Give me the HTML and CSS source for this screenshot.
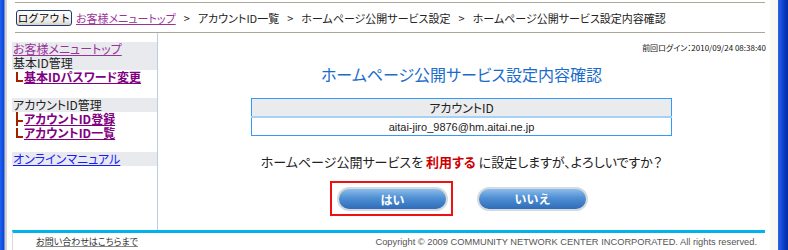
FILE: index.html
```html
<!DOCTYPE html>
<html lang="ja">
<head>
  <meta charset="UTF-8">
  <link rel="stylesheet" href="styles.css">
</head>
<body>
  <div class="window">
    <div class="edge-left"></div>

    <div class="page">
      <div class="topbar">
        <button class="logout">ログアウト</button>
        <a class="crumb-link" href="#">お客様メニュートップ</a>
        <span class="sep">&gt;</span>
        <span>アカウントID一覧</span>
        <span class="sep">&gt;</span>
        <span>ホームページ公開サービス設定</span>
        <span class="sep">&gt;</span>
        <span>ホームページ公開サービス設定内容確認</span>
      </div>

      <div class="content">
        <div class="side">
          <div class="group">
            <a class="head visited" href="#">お客様メニュートップ</a>
            <div class="head">基本ID管理</div>
            <div class="sub"><span class="tree"></span><a href="#">基本IDパスワード変更</a></div>
          </div>
          <div class="group">
            <div class="head">アカウントID管理</div>
            <div class="sub"><span class="tree tee"></span><a href="#">アカウントID登録</a></div>
            <div class="sub"><span class="tree"></span><a href="#">アカウントID一覧</a></div>
          </div>
          <div class="group last">
            <a class="head manual" href="#">オンラインマニュアル</a>
          </div>
        </div>

        <div class="main">
          <div class="last-login">前回ログイン：2010/09/24 08:38:40</div>
          <h1 class="title">ホームページ公開サービス設定内容確認</h1>

          <table class="account">
            <tr><th>アカウントID</th></tr>
            <tr><td>aitai-jiro_9876@hm.aitai.ne.jp</td></tr>
          </table>

          <p class="question">ホームページ公開サービスを <strong>利用する</strong> に設定しますが、よろしいですか？</p>

          <div class="actions">
            <div class="focus"><button class="pill">はい</button></div>
            <button class="pill">いいえ</button>
          </div>
        </div>
      </div>

      <div class="footer">
        <a class="contact" href="#">お問い合わせはこちらまで</a>
        <span class="copy">Copyright © 2009 COMMUNITY NETWORK CENTER INCORPORATED. All rights reserved.</span>
      </div>
    </div>

    <div class="gutter"></div>
    <div class="edge-right"></div>
  </div>
</body>
</html>
```

FILE: styles.css
```css
html, body {
  margin: 0;
  padding: 0;
  height: 250px;
  overflow: hidden;
  background: #fff;
}
body {
  font-family: "Noto Sans CJK JP", "Liberation Sans", sans-serif;
  font-size: 12px;
  color: #222;
  font-feature-settings: "palt";
}
.window {
  display: flex;
  height: 250px;
}
.edge-left {
  width: 4px;
  background: linear-gradient(to right, #1f63ef, #0b45d8);
  border-right: 1px solid #6f8fd6;
  box-shadow: 2px 0 0 #d6d3cc;
}
.page {
  flex: 1;
  display: flex;
  flex-direction: column;
  padding: 0 5px 0 7px;
}
.gutter {
  width: 8px;
  background: #f9f8f3;
}
.edge-right {
  width: 10px;
  background: linear-gradient(to right, #2c62e6, #0a3cc8 60%, #062b9c);
}

/* top bar */
.topbar {
  margin: 2px 0 0 3px;
  height: 29px;
  border-top: 1px solid #aca899;
  border-bottom: 1px solid #aca899;
  display: flex;
  align-items: center;
  gap: 4px;
  white-space: nowrap;
  color: #222;
  font-size: 11px;
}
.logout {
  width: 56px;
  height: 16px;
  margin: 0 0 0 1px;
  padding: 0;
  font-family: inherit;
  font-size: 10.5px;
  line-height: 14px;
  color: #000;
  border: 1px solid #1d3d72;
  border-radius: 3px;
  background: linear-gradient(#ffffff, #ecebe6 70%, #d6d2c8);
}
.crumb-link {
  color: #993399;
}
.sep {
  margin: 0 4px;
}

/* body */
.content {
  flex: 1;
  display: flex;
}
.side {
  width: 145px;
  border-right: 1px solid #b8cde6;
  padding-top: 9px;
}
.group {
  margin-bottom: 14px;
}
.group + .group.last {
  margin-top: -2px;
}
.side .head {
  display: block;
  background: #e8eaee;
  line-height: 14px;
  padding-left: 1px;
  color: #222;
}
.side a.head.visited {
  color: #993399;
}
.side a.head.manual {
  color: #1a1aff;
}
.sub {
  line-height: 14px;
  padding-left: 4px;
  font-weight: bold;
}
.sub a {
  color: #800080;
}
.tree {
  display: inline-block;
  width: 5px;
  height: 8px;
  border-left: 2px solid #a02000;
  border-bottom: 2px solid #a02000;
  margin-right: 1px;
}
.tree.tee {
  height: 14px;
  border-bottom: 0;
  background: linear-gradient(#a02000, #a02000) no-repeat 0 8px / 5px 2px;
  vertical-align: -2px;
}

.main {
  flex: 1;
  display: flex;
  flex-direction: column;
  align-items: center;
}
.last-login {
  align-self: flex-end;
  margin: 8px -1px 0 0;
  font-size: 8px;
  line-height: 13px;
  color: #111;
}
.title {
  margin: 10px 0 0;
  font-size: 16px;
  font-weight: normal;
  color: #1a6ccc;
  line-height: 20px;
}
.account {
  margin-top: 14px;
  width: 421px;
  border-collapse: collapse;
  border: 1px solid #3399ff;
}
.account th {
  background: #e9ebed;
  font-weight: normal;
  height: 17px;
  padding: 0;
  border-bottom: 2px solid #a6d0f6;
}
.account td {
  height: 17px;
  padding: 0;
  text-align: center;
  font-family: "Liberation Sans", sans-serif;
  font-size: 11px;
}
.question {
  margin: 17px 0 0;
  font-size: 13px;
  line-height: 17px;
}
.question strong {
  color: #cc0000;
}
.actions {
  margin: 11px 5px 0 0;
  display: flex;
  align-items: center;
  gap: 24px;
}
.focus {
  border: 2px solid #ee1111;
  padding: 4px 3px 3px 5px;
}
.pill {
  width: 111px;
  height: 24px;
  border-radius: 12px;
  border: 2px solid #d4dae0;
  background: linear-gradient(#8bbde9, #4f8fd3 45%, #2f6cb9);
  color: #fff;
  font-family: inherit;
  font-weight: bold;
  font-size: 12px;
  padding: 0;
}

/* footer */
.footer {
  height: 17px;
  border-top: 3px solid #00b3ef;
  border-left: 1px solid #d8d8d8;
  display: flex;
  align-items: center;
  justify-content: space-between;
  padding: 0 8px 0 23px;
}
.contact {
  font-size: 9px;
  color: #333;
  text-decoration-color: #888;
}
.copy {
  font-family: "Liberation Sans", sans-serif;
  font-size: 9.3px;
  color: #555;
}
```
